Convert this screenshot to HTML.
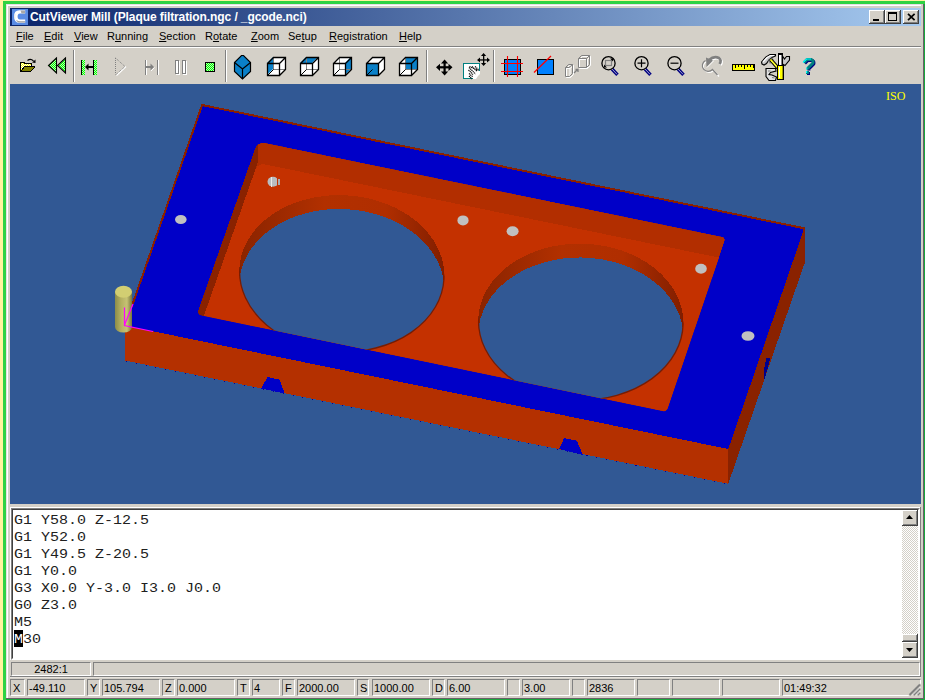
<!DOCTYPE html>
<html><head><meta charset="utf-8">
<style>
*{margin:0;padding:0;box-sizing:border-box}
html,body{width:925px;height:700px;overflow:hidden;background:#fff49e;font-family:"Liberation Sans",sans-serif}
.a{position:absolute}
#green{left:3px;top:1px;width:922px;height:699px;background:#2ed243}
#win{left:6px;top:4px;width:918px;height:695px;background:#d4d0c8;border-left:1px solid #e8dee4;border-top:1px solid #e8dee4}
#title{left:10px;top:8px;width:911px;height:18px;background:linear-gradient(to right,#0a246a,#a6caf0)}
#ttext{left:30px;top:10px;font:bold 12px "Liberation Sans",sans-serif;color:#fff;white-space:nowrap;letter-spacing:-0.09px}
.btn{width:16px;height:14px;background:#d4d0c8;box-shadow:inset -1px -1px #404040,inset 1px 1px #fff,inset -2px -2px #808080}
.sbb{width:16px;height:16px;background:#d4d0c8;box-shadow:inset -1px -1px #404040,inset 1px 1px #fff,inset -2px -2px #808080}
.menu{top:30px;font-size:11px;color:#000;white-space:nowrap}
.menu u{text-decoration:underline;text-decoration-thickness:1px;text-underline-offset:1px}
#viewport{left:10px;top:84px;width:911px;height:420px;background:#315894;overflow:hidden}
#code{left:11px;top:508px;width:909px;height:152px;border-top:1px solid #808080;border-left:1px solid #808080;border-right:1px solid #fff;border-bottom:1px solid #fff}
#codein{left:0;top:0;width:907px;height:150px;border-top:1px solid #404040;border-left:1px solid #404040;border-right:1px solid #fff;border-bottom:1px solid #fff;background:#fff;overflow:hidden}
.cl{position:absolute;left:1px;font:15px "Liberation Mono",monospace;color:#202020;white-space:pre;height:17px;line-height:17px;transform:scaleY(0.8);transform-origin:0 12.5px}
.pn{position:absolute;height:17px;border-top:1px solid #808080;border-left:1px solid #808080;border-right:1px solid #fff;border-bottom:1px solid #fff;font-size:11px;line-height:17px;white-space:nowrap;padding-left:1px;color:#000}
.pl{padding-left:2px}
</style></head><body>
<div id="green" class="a"></div>
<div class="a" style="left:924px;top:4px;width:1px;height:696px;background:#18a83c"></div>
<div class="a" style="left:6px;top:699px;width:919px;height:1px;background:#18a83c"></div>
<div id="win" class="a"></div>
<div class="a" style="left:7px;top:5px;width:916px;height:1px;background:#fff"></div>
<div class="a" style="left:7px;top:5px;width:1px;height:693px;background:#fff"></div>
<div class="a" style="left:921px;top:4px;width:2px;height:695px;background:#d4d0c8"></div>
<div class="a" style="left:923px;top:4px;width:1px;height:695px;background:#6a5f68"></div>
<div class="a" style="left:6px;top:698px;width:918px;height:1px;background:#6a5f68"></div>
<div id="title" class="a"></div>
<div id="ttext" class="a">CutViewer Mill (Plaque filtration.ngc / _gcode.nci)</div>
<svg class="a" style="left:12px;top:9px" width="16" height="16" viewBox="0 0 16 16"><rect width="16" height="16" fill="#5a8ce4"/><path d="M13.2,1.2 H7.5 Q2,1.2 2,7.2 Q2,13.8 7.5,13.8 H13.2 V10.5 H8 Q5.6,10.5 5.6,7.5 Q5.6,4.6 8,4.6 H13.2 Z" fill="#fff"/><path d="M8.5,1.5 H13 V4.4 H9.5 Z" fill="#a8a8a8"/><path d="M4.5,12 Q6,13.6 8,13.6 H13 V12.2 H8 Q6,12.2 4.5,11 Z" fill="#9a9a9a"/><path d="M3,5 Q2.5,7 3,9.5" stroke="#e0e0e0" stroke-width="0.8" fill="none"/></svg>
<div class="a btn" style="left:869px;top:10px"><div class="a" style="left:4px;top:9px;width:6px;height:2px;background:#000"></div></div>
<div class="a btn" style="left:885px;top:10px"><div class="a" style="left:3px;top:2px;width:9px;height:9px;border:1px solid #000;border-top-width:2px"></div></div>
<div class="a btn" style="left:903px;top:10px"><svg class="a" style="left:4px;top:3px" width="9" height="8" viewBox="0 0 9 8"><path d="M1,0.8 L7.6,7.2 M7.6,0.8 L1,7.2" stroke="#000" stroke-width="1.7"/></svg></div>


<!-- menu -->
<div class="a menu" style="left:16px"><u>F</u>ile</div>
<div class="a menu" style="left:44px"><u>E</u>dit</div>
<div class="a menu" style="left:74px"><u>V</u>iew</div>
<div class="a menu" style="left:107px">R<u>u</u>nning</div>
<div class="a menu" style="left:159px"><u>S</u>ection</div>
<div class="a menu" style="left:205px">R<u>o</u>tate</div>
<div class="a menu" style="left:251px"><u>Z</u>oom</div>
<div class="a menu" style="left:288px">Se<u>t</u>up</div>
<div class="a menu" style="left:329px"><u>R</u>egistration</div>
<div class="a menu" style="left:399px"><u>H</u>elp</div>
<div class="a" style="left:10px;top:46px;width:911px;height:1px;background:#808080"></div>
<div class="a" style="left:10px;top:47px;width:911px;height:1px;background:#fff"></div>

<!-- toolbar separators -->
<div class="a" style="left:73px;top:50px;width:1px;height:32px;background:#808080"></div>
<div class="a" style="left:74px;top:50px;width:1px;height:32px;background:#fff"></div>
<div class="a" style="left:225px;top:50px;width:1px;height:32px;background:#808080"></div>
<div class="a" style="left:226px;top:50px;width:1px;height:32px;background:#fff"></div>
<div class="a" style="left:426px;top:50px;width:1px;height:32px;background:#808080"></div>
<div class="a" style="left:427px;top:50px;width:1px;height:32px;background:#fff"></div>
<div class="a" style="left:493px;top:50px;width:1px;height:32px;background:#808080"></div>
<div class="a" style="left:494px;top:50px;width:1px;height:32px;background:#fff"></div>

<!-- TOOLBAR_ICONS -->
<svg class="a" style="left:10px;top:48px" width="911" height="36" viewBox="10 48 911 36">
<defs><pattern id="gd" width="2" height="2" patternUnits="userSpaceOnUse"><rect width="2" height="2" fill="#b8f8b0"/><rect width="1" height="1" fill="#00ff00"/><rect x="1" y="1" width="1" height="1" fill="#00ff00"/></pattern><pattern id="yd" width="2" height="2" patternUnits="userSpaceOnUse"><rect width="2" height="2" fill="#ffffff"/><rect width="1" height="1" fill="#ffff00"/><rect x="1" y="1" width="1" height="1" fill="#ffff00"/></pattern></defs>
<g shape-rendering="crispEdges">
<path d="M21,62 h3 v1 h7 v3 h-7 l-3,5 z" fill="url(#yd)"/>
<path d="M20.5,71.5 V62.5 h3.5 v1 h7 v3" fill="none" stroke="#000"/>
<path d="M24,66 h11 v1 l-4,5 h-10 v-1 z" fill="#000"/>
<path d="M24.5,67 h9.5 l-3.5,4 h-8.5 z" fill="#808000"/>
</g>
<path d="M27.5,60.5 Q30.5,58 33.5,61" fill="none" stroke="#000" stroke-width="1.1"/>
<path d="M32,62.5 L35.5,59.5 L35.5,63 Z" fill="#000"/>
<path d="M56.5,58 L48.5,65.5 L56.5,73 Z M65.5,58 L57.5,65.5 L65.5,73 Z" fill="url(#gd)" stroke="#000" stroke-width="1.1"/>
<g shape-rendering="crispEdges"><rect x="81" y="60" width="1" height="15" fill="#000"/><rect x="82" y="60" width="3" height="15" fill="url(#gd)"/><rect x="93" y="60" width="1" height="15" fill="#000"/><rect x="94" y="60" width="3" height="15" fill="url(#gd)"/><rect x="87" y="66" width="6" height="2" fill="#000"/></g>
<path d="M85,67 L88.5,63.5 L88.5,70.5 Z" fill="#000"/>
<path d="M116.5,75.5 L126,66.5" stroke="#fff" stroke-width="1.2" fill="none"/>
<path d="M115.5,58 V74.5 M115.5,58 L125,66.5 L115.5,75" stroke="#808080" stroke-width="1" stroke-dasharray="1,1" fill="none"/>
<g shape-rendering="crispEdges"><rect x="146" y="60" width="1" height="15" fill="#fff"/><rect x="145" y="60" width="1" height="15" fill="#808080"/><rect x="158" y="60" width="1" height="15" fill="#fff"/><rect x="157" y="60" width="1" height="15" fill="#808080"/><rect x="146" y="66" width="6" height="2" fill="#808080"/></g>
<path d="M154,67 L150.5,63.5 L150.5,70.5 Z" fill="#808080"/><path d="M151,71 L154.5,67.5" stroke="#fff" fill="none"/>
<g shape-rendering="crispEdges"><rect x="176" y="61" width="4" height="14" fill="#fff"/><rect x="175.5" y="60.5" width="3" height="13" fill="#fff" stroke="#808080"/><rect x="183" y="61" width="4" height="14" fill="#fff"/><rect x="182.5" y="60.5" width="3" height="13" fill="#fff" stroke="#808080"/></g>
<rect x="205.5" y="62.5" width="9" height="9" fill="url(#gd)" stroke="#000" stroke-width="1.3" shape-rendering="crispEdges"/>
<path d="M241.5,55.5 h2 L250.5,62.5 V71.5 L242.5,79 L234.5,71.5 V62.5 Z" fill="#0a80c8" stroke="#000" stroke-width="1.2"/>
<path d="M234.5,62.5 L242.5,69 L250.5,62.5 M242.5,69 V79" fill="none" stroke="#000" stroke-width="1.2"/>
<path d="M267,63 L273,57 H285 V69 L279,75 H267 Z" fill="#fff"/>
<path d="M267,63 L273,57 V69 L267,75 Z" fill="#0a80c8"/>
<path d="M273.5,57 V69.5 H285" fill="none" stroke="#808080" stroke-width="1" shape-rendering="crispEdges"/>
<path d="M267.5,63.5 H279.5 V75.5 H267.5 Z M267.5,63.5 L273.5,57.5 H285.5 V69.5 L279.5,75.5 M279.5,63.5 L285.5,57.5" fill="none" stroke="#000" stroke-width="1.3"/>
<path d="M267.5,75.5 L273.5,69.5" stroke="#000" stroke-width="1"/>
<path d="M300,63 L306,57 H318 V69 L312,75 H300 Z" fill="#fff"/>
<path d="M300,63 L306,57 H318 L312,63 Z" fill="#0a80c8"/>
<path d="M306.5,57 V69.5 H318" fill="none" stroke="#808080" stroke-width="1" shape-rendering="crispEdges"/>
<path d="M300.5,63.5 H312.5 V75.5 H300.5 Z M300.5,63.5 L306.5,57.5 H318.5 V69.5 L312.5,75.5 M312.5,63.5 L318.5,57.5" fill="none" stroke="#000" stroke-width="1.3"/>
<path d="M300.5,75.5 L306.5,69.5" stroke="#000" stroke-width="1"/>
<path d="M333,63 L339,57 H351 V69 L345,75 H333 Z" fill="#fff"/>
<path d="M345,63 L351,57 V69 L345,75 Z" fill="#0a80c8"/>
<path d="M339.5,57 V69.5 H351" fill="none" stroke="#808080" stroke-width="1" shape-rendering="crispEdges"/>
<path d="M333.5,63.5 H345.5 V75.5 H333.5 Z M333.5,63.5 L339.5,57.5 H351.5 V69.5 L345.5,75.5 M345.5,63.5 L351.5,57.5" fill="none" stroke="#000" stroke-width="1.3"/>
<path d="M333.5,75.5 L339.5,69.5" stroke="#000" stroke-width="1"/>
<path d="M366,63 L372,57 H384 V69 L378,75 H366 Z" fill="#fff"/>
<path d="M366,63 H378 V75 H366 Z" fill="#0a80c8"/>
<path d="M366.5,63.5 H378.5 V75.5 H366.5 Z M366.5,63.5 L372.5,57.5 H384.5 V69.5 L378.5,75.5 M378.5,63.5 L384.5,57.5" fill="none" stroke="#000" stroke-width="1.3"/>
<path d="M366.5,75.5 L372.5,69.5" stroke="#000" stroke-width="1"/>
<path d="M399,63 L405,57 H417 V69 L411,75 H399 Z" fill="#fff"/>
<path d="M405,57 H417 V69 H405 Z" fill="#0a80c8"/>
<path d="M405.5,57 V69.5 H417" fill="none" stroke="#808080" stroke-width="1" shape-rendering="crispEdges"/>
<path d="M399.5,63.5 H411.5 V75.5 H399.5 Z M399.5,63.5 L405.5,57.5 H417.5 V69.5 L411.5,75.5 M411.5,63.5 L417.5,57.5" fill="none" stroke="#000" stroke-width="1.3"/>
<path d="M399.5,75.5 L405.5,69.5" stroke="#000" stroke-width="1"/>
<g fill="#000"><rect x="443.5" y="61" width="2.2" height="13"/><rect x="438" y="66.2" width="13" height="2.2"/><path d="M444.6,59.5 L441,63.5 H448.2 Z M444.6,75.5 L441,71.5 H448.2 Z M436,67.3 L440,63.7 V70.9 Z M452.5,67.3 L448.5,63.7 V70.9 Z"/></g>
<rect x="463" y="63" width="17" height="16" fill="#fff" shape-rendering="crispEdges"/>
<path d="M473,78.5 H463.5 V63.5 H479.5 V70.5" fill="none" stroke="#008080" stroke-width="1.2" shape-rendering="crispEdges"/>
<path d="M478,76 L481,73 V79 H476 Z" fill="#d4d0c8"/>
<g stroke="#000" stroke-width="1.2" fill="none" stroke-dasharray="1.2,0.6">
<path d="M469.5,66.5 L478.5,70.5 M469,67.5 L475.5,74 M468.5,70 L473,74.5 M472,66.5 L477,71.5 M475,66.5 L479,70 M469,73.5 L473,77 M469,76 L472,79"/>
</g>
<g fill="#000"><rect x="483" y="55" width="1.3" height="10"/><rect x="478.5" y="59.3" width="10.5" height="1.3"/><path d="M483.6,53 L481,56 H486.2 Z M483.6,66 L481,63 H486.2 Z M477,60 L480,57.4 V62.6 Z M490,60 L487,57.4 V62.6 Z"/></g>
<rect x="504.5" y="59.5" width="16" height="15" fill="#0080ff" stroke="#000" stroke-width="1.3" shape-rendering="crispEdges"/>
<path d="M507.5,56 V77 M517.5,56 V77 M501,63.5 H523 M501,71.5 H523" stroke="#ff0000" stroke-width="1.1" fill="none"/>
<rect x="537.5" y="59.5" width="16" height="15" fill="#0080ff" stroke="#000" stroke-width="1.3" shape-rendering="crispEdges"/>
<path d="M534,72.5 L551,56" stroke="#ff0000" stroke-width="1.3" fill="none"/>
<g fill="none" stroke-width="1">
<path d="M565.5,76.5 V67.5 L568.5,64.5 H572.5 V73.5 L569.5,76.5 Z M565.5,67.5 H569 L572.5,64.5 M569,67.5 V76.5" stroke="#fff" transform="translate(1,1)"/>
<path d="M565.5,76.5 V67.5 L568.5,64.5 H572.5 V73.5 L569.5,76.5 Z M565.5,67.5 H569 L572.5,64.5" stroke="#808080"/>
<path d="M578.5,67.5 V58.5 L581.5,55.5 H589.5 V64.5 L586.5,67.5 Z M578.5,58.5 H586.5 L589.5,55.5 M586.5,58.5 V67.5" stroke="#fff" transform="translate(1,1)"/>
<path d="M578.5,67.5 V58.5 L581.5,55.5 H589.5 V64.5 L586.5,67.5 Z M578.5,58.5 H586.5 L589.5,55.5 M586.5,58.5 V67.5" stroke="#808080"/>
<path d="M574,73 L578,69 M575.5,69.5 H578 V72" stroke="#808080" stroke-width="1.3"/>
</g>
<path d="M612.0,69 L617.5,74.8" stroke="#000080" stroke-width="3.4" fill="none"/>
<path d="M612.0,69 L617.0,74.3" stroke="#fff" stroke-width="0.8" fill="none" opacity="0.8"/>
<circle cx="608.5" cy="63.2" r="6.6" fill="none" stroke="#000" stroke-width="1.3"/>
<rect x="605.5" y="60.5" width="6" height="5" fill="none" stroke="#808080" stroke-width="1.2"/><path d="M604,67.5 L604,64.5 L607,67.5 Z M613,58.5 L613,61.5 L610,58.5 Z" fill="#000"/>
<path d="M645.0,69 L650.5,74.8" stroke="#000080" stroke-width="3.4" fill="none"/>
<path d="M645.0,69 L650.0,74.3" stroke="#fff" stroke-width="0.8" fill="none" opacity="0.8"/>
<circle cx="641.5" cy="63.2" r="6.6" fill="none" stroke="#000" stroke-width="1.3"/>
<path d="M637.5,63.2 H645.5 M641.5,59.2 V67.2" stroke="#000" stroke-width="1.2"/>
<path d="M678.0,69 L683.5,74.8" stroke="#000080" stroke-width="3.4" fill="none"/>
<path d="M678.0,69 L683.0,74.3" stroke="#fff" stroke-width="0.8" fill="none" opacity="0.8"/>
<circle cx="674.5" cy="63.2" r="6.6" fill="none" stroke="#000" stroke-width="1.3"/>
<path d="M670.5,63.2 H678.5" stroke="#000" stroke-width="1.2"/>
<g fill="none">
<path d="M705.5,60.5 A5.8,5.8 0 1 0 712.5,69.5 L718,75.5" stroke="#fff" stroke-width="1.2" transform="translate(1,1)"/>
<path d="M705.5,60.5 A5.8,5.8 0 1 0 712.5,69.5 L717.5,75" stroke="#808080" stroke-width="1.2"/>
<path d="M709,60 Q714,55.5 719,58 Q722,60.5 719.5,64" stroke="#fff" stroke-width="2.6" transform="translate(1,1)"/>
<path d="M709,60 Q714,55.5 719,58 Q722,60.5 719.5,64" stroke="#808080" stroke-width="2.6"/>
</g>
<path d="M706,57.5 L713,60.5 L706.5,67 Z" fill="#808080"/><path d="M707,67.5 L713.5,61" stroke="#fff" stroke-width="1"/>
<rect x="732.5" y="64.5" width="22" height="6" fill="#ffff00" stroke="#000" stroke-width="1.3" shape-rendering="crispEdges"/>
<path d="M735.5,65 V68 M738.5,65 V67 M741.5,65 V67 M744.5,65 V68.5 M747.5,65 V67 M750.5,65 V67 M753,65 V68" stroke="#000" stroke-width="1" shape-rendering="crispEdges"/>
<path d="M761.5,62 L766,57 L770,54.5 H775.5 V56 L772,57.5 L769,60 L766.5,63.5 L764,65 L762,64 Z" fill="#c8c8c8" stroke="#000" stroke-width="1.1"/>
<path d="M763,62 L767,57.5 L770.5,55.5 H774" stroke="#fff" stroke-width="1.2" fill="none"/>
<path d="M768,61 L772,57.5 L774,60 L770,64 Z" fill="#909090"/>
<path d="M770.5,59.5 L778,68" stroke="#000" stroke-width="3.6" fill="none"/><path d="M770.5,59.5 L778,68" stroke="#ffff00" stroke-width="1.8" fill="none"/><path d="M771.5,61 L777,67" stroke="#fff" stroke-width="0.7" stroke-dasharray="1,1" fill="none"/>
<path d="M782.5,56 L784.5,59 L786.5,56.5 H789.5 V60 L785,65.5 L782.5,64 Z" fill="#c8c8c8" stroke="#000" stroke-width="1.1"/>
<path d="M766,68.5 H775.5 L776,71 L770.5,72.5 L769,74.5 L772,75 L776.5,77 L775.5,80.5 H769 L766,76.5 Z" fill="#e0e0e0" stroke="#000" stroke-width="1.1"/>
<path d="M768,71 L770.5,71 M772,77.5 L774.5,78" stroke="#808080" stroke-width="1.2" fill="none"/>
<rect x="778" y="53" width="5" height="2" fill="#000" shape-rendering="crispEdges"/>
<rect x="779" y="55" width="3" height="10" fill="#fff" shape-rendering="crispEdges"/><rect x="781" y="55" width="1" height="10" fill="#808080" shape-rendering="crispEdges"/><rect x="778" y="55" width="1" height="10" fill="#000" shape-rendering="crispEdges"/><rect x="782" y="55" width="1" height="10" fill="#000" shape-rendering="crispEdges"/>
<path d="M777.5,65.5 H783.5 V79.5 H777.5 Z" fill="#ffff00" stroke="#000" stroke-width="1.1" shape-rendering="crispEdges"/>
<rect x="779" y="67" width="1" height="11" fill="#fff" shape-rendering="crispEdges"/><rect x="782" y="66" width="1" height="13" fill="#a0a000" shape-rendering="crispEdges"/>
<path d="M804,62.5 L807,59.5 H811.5 L813,61 V63 L808,68 V69.5" fill="none" stroke="#000080" stroke-width="3" stroke-linejoin="bevel" transform="translate(0.9,0.9)"/>
<path d="M804,62.5 L807,59.5 H811.5 L813,61 V63 L808,68 V69.5" fill="none" stroke="#008080" stroke-width="3" stroke-linejoin="bevel"/>
<path d="M803,62.5 L806.5,59 H811" fill="none" stroke="#00ffff" stroke-width="1.2"/><path d="M806.8,67.5 V69.5" fill="none" stroke="#00ffff" stroke-width="1"/>
<rect x="807" y="72" width="3" height="3" fill="#000080"/><rect x="806" y="71" width="3" height="3" fill="#008080"/><rect x="806" y="71" width="1.2" height="2" fill="#00ffff"/>
</svg>
<!-- /TOOLBAR_ICONS -->

<div id="viewport" class="a">
<!-- SCENE -->
<svg class="a" style="left:0;top:0" width="911" height="420" viewBox="10 84 911 420" shape-rendering="crispEdges">
<defs>
<clipPath id="pk"><path d="M255.0,149.0 Q257.7,141.4 265.5,143.0 L721.9,236.7 Q725.8,237.5 724.5,241.3 L667.8,408.0 Q666.5,411.8 662.6,411.0 L201.7,315.4 Q196.8,314.4 198.5,309.7 Z"/></clipPath>
<clipPath id="ex0"><ellipse cx="341.8" cy="287.40000000000003" rx="104.6" ry="80.4" transform="rotate(2.85 341.8 287.40000000000003)"/></clipPath>
<clipPath id="rim0"><ellipse cx="341.8" cy="273.6" rx="102.6" ry="78.4" transform="rotate(2.85 341.8 273.6)"/></clipPath>
<clipPath id="ex1"><ellipse cx="580.8" cy="335.8" rx="104.6" ry="80.3" transform="rotate(1.19 580.8 335.8)"/></clipPath>
<clipPath id="rim1"><ellipse cx="580.8" cy="322.0" rx="102.6" ry="78.3" transform="rotate(1.19 580.8 322.0)"/></clipPath>
<linearGradient id="hw" x1="0" x2="1" y1="0" y2="0"><stop offset="0" stop-color="#8a2400"/><stop offset="0.4" stop-color="#b23000"/><stop offset="0.7" stop-color="#b02e00"/><stop offset="1" stop-color="#801e00"/></linearGradient>
<linearGradient id="tw" x1="0" x2="1" y1="0" y2="0"><stop offset="0" stop-color="#9a2800"/><stop offset="0.12" stop-color="#b22e00"/><stop offset="1" stop-color="#b22e00"/></linearGradient>
</defs>
<polygon points="125.1,325.6 728.3,449.0 728.3,483.8 125.0,360.5" fill="#b43000"/>
<polygon points="804.3,228.3 804.3,264.0 728.3,483.8 728.3,449.0" fill="#8a2200"/>
<polygon points="261.3,388.5 267.4,377 279.5,379.7 284.8,393.5" fill="#0000c8"/>
<polygon points="559.2,449 564,438.2 576.7,440.6 583,455" fill="#0000c8"/>
<polygon points="766.5,358 770.5,358 764,381 764,369" fill="#00008c"/>
<line x1="126" y1="361.5" x2="727" y2="484.5" stroke="#0000a0" stroke-width="1" stroke-dasharray="1,9" shape-rendering="crispEdges"/>
<polygon points="202.1,105.0 804.3,228.3 728.3,449.0 125.1,325.6" fill="#0000c8"/>
<polyline points="125.1,325.6 202.1,105.0 804.3,228.3 804.3,264.0" fill="none" stroke="#8b2000" stroke-width="2" shape-rendering="crispEdges"/>
<g clip-path="url(#pk)">
<path d="M255.0,149.0 Q257.7,141.4 265.5,143.0 L721.9,236.7 Q725.8,237.5 724.5,241.3 L667.8,408.0 Q666.5,411.8 662.6,411.0 L201.7,315.4 Q196.8,314.4 198.5,309.7 Z" fill="url(#tw)"/>
<polygon points="257.7,141.4 196.8,314.4 196.8,335.9 257.7,162.9" fill="#8a2200"/>
<path d="M255.0,170.5 Q257.7,162.9 265.5,164.5 L721.9,258.2 Q725.8,259.0 724.5,262.8 L667.8,429.5 Q666.5,433.3 662.6,432.5 L201.7,336.9 Q196.8,335.9 198.5,331.2 Z" fill="#c43100"/>
<ellipse cx="341.8" cy="273.6" rx="102.6" ry="78.4" transform="rotate(2.85 341.8 273.6)" fill="url(#hw)"/>
<g clip-path="url(#rim0)"><ellipse cx="341.8" cy="287.40000000000003" rx="102.6" ry="78.4" transform="rotate(2.85 341.8 287.40000000000003)" fill="#315894"/></g>
<g clip-path="url(#ex0)"><ellipse cx="341.8" cy="273.6" rx="102.3" ry="78.10000000000001" transform="rotate(2.85 341.8 273.6)" fill="none" stroke="#7a1c00" stroke-width="1.3" shape-rendering="auto"/></g>
<ellipse cx="580.8" cy="322.0" rx="102.6" ry="78.3" transform="rotate(1.19 580.8 322.0)" fill="url(#hw)"/>
<g clip-path="url(#rim1)"><ellipse cx="580.8" cy="335.8" rx="102.6" ry="78.3" transform="rotate(1.19 580.8 335.8)" fill="#315894"/></g>
<g clip-path="url(#ex1)"><ellipse cx="580.8" cy="322.0" rx="102.3" ry="78.0" transform="rotate(1.19 580.8 322.0)" fill="none" stroke="#7a1c00" stroke-width="1.3" shape-rendering="auto"/></g>
</g>
<ellipse cx="180.8" cy="219.5" rx="5.8" ry="4.6" fill="#c0c0c0" shape-rendering="auto"/>
<ellipse cx="463" cy="220.4" rx="5.6" ry="5" fill="#c0c0c0" shape-rendering="auto"/>
<ellipse cx="512.6" cy="231.2" rx="6" ry="5" fill="#c0c0c0" shape-rendering="auto"/>
<ellipse cx="701" cy="268.8" rx="5.8" ry="5" fill="#c0c0c0" shape-rendering="auto"/>
<ellipse cx="748" cy="336" rx="6.5" ry="4.8" fill="#c0c0c0" shape-rendering="auto"/>
<ellipse cx="273" cy="181.8" rx="5.5" ry="5" fill="#b8bcc0" shape-rendering="auto"/><rect x="270.5" y="177" width="1" height="10" fill="#e8e8e8"/><rect x="276.5" y="177" width="1.2" height="10" fill="#c43100"/><rect x="278" y="179" width="2" height="6" fill="#a8acb0"/><rect x="265" y="176" width="2.5" height="4" fill="#c43100"/>
<g shape-rendering="auto">
<linearGradient id="tl" x1="0" x2="1"><stop offset="0" stop-color="#8c8c48"/><stop offset="0.35" stop-color="#b4b060"/><stop offset="0.7" stop-color="#c6c274"/><stop offset="1" stop-color="#76743a"/></linearGradient>
<path d="M115,291.7 L115,327 A8.5,5.5 0 0 0 132,327 L132,291.7 Z" fill="url(#tl)"/>
<ellipse cx="123.5" cy="291.7" rx="8.5" ry="6" fill="#d2ce72"/>
</g>
<polyline points="124.5,307.5 124.5,325.5 153,331.5" fill="none" stroke="#ff00ff" stroke-width="1.2" shape-rendering="auto"/>
<line x1="124.5" y1="325" x2="133" y2="304" stroke="#ff00ff" stroke-width="1.2" shape-rendering="auto"/>
<text x="886" y="100" font-family="Liberation Serif" font-size="12" fill="#ffff00">ISO</text>
</svg>
<!-- /SCENE -->
</div>

<div class="a" style="left:10px;top:507px;width:911px;height:1px;background:#fff"></div>
<div class="a" style="left:10px;top:507px;width:1px;height:153px;background:#fff"></div>
<div id="code" class="a"><div id="codein" class="a">
<div class="a" style="left:889px;top:0;width:16px;height:148px;background:repeating-conic-gradient(#fff 0 25%,#d4d0c8 0 50%) 0 0/2px 2px"></div>
<div class="a sbb" style="left:889px;top:0"><svg class="a" style="left:4px;top:5px" width="7" height="4" viewBox="0 0 7 4"><path d="M3.5,0 L7,4 H0 Z" fill="#000"/></svg></div>
<div class="a sbb" style="left:889px;top:124px;height:8px"></div>
<div class="a sbb" style="left:889px;top:132px"><svg class="a" style="left:4px;top:6px" width="7" height="4" viewBox="0 0 7 4"><path d="M0,0 H7 L3.5,4 Z" fill="#000"/></svg></div>
<div class="cl" style="top:2px">G1 Y58.0 Z-12.5</div>
<div class="cl" style="top:19px">G1 Y52.0</div>
<div class="cl" style="top:36px">G1 Y49.5 Z-20.5</div>
<div class="cl" style="top:53px">G1 Y0.0</div>
<div class="cl" style="top:70px">G3 X0.0 Y-3.0 I3.0 J0.0</div>
<div class="cl" style="top:87px">G0 Z3.0</div>
<div class="cl" style="top:104px">M5</div>
<div class="a" style="left:1px;top:120px;width:9px;height:17px;background:#000"></div>
<div class="cl" style="top:121px"><span style="color:#fff">M</span>30</div>
</div></div>

<!-- STATUS -->

<div class="a" style="left:11px;top:662px;width:80px;height:14px;border-top:1px solid #808080;border-left:1px solid #808080;border-right:1px solid #fff;border-bottom:1px solid #fff;font-size:11px;line-height:12px;text-align:center">2482:1</div>
<div class="a" style="left:93px;top:662px;width:827px;height:14px;border-top:1px solid #808080;border-left:1px solid #808080;border-right:1px solid #fff;border-bottom:1px solid #fff"></div>
<div class="a" style="left:10px;top:676px;width:911px;height:1px;background:#808080"></div>
<div class="a" style="left:920px;top:507px;width:1px;height:170px;background:#808080"></div>
<div class="a" style="left:10px;top:677px;width:911px;height:1px;background:#e6e2dc"></div>
<div class="pn pl" style="left:10px;top:679px;width:15px">X</div>
<div class="pn" style="left:27px;top:679px;width:58px">-49.110</div>
<div class="pn pl" style="left:87px;top:679px;width:13px">Y</div>
<div class="pn" style="left:102px;top:679px;width:58px">105.794</div>
<div class="pn pl" style="left:162px;top:679px;width:13px">Z</div>
<div class="pn" style="left:177px;top:679px;width:58px">0.000</div>
<div class="pn pl" style="left:237px;top:679px;width:13px">T</div>
<div class="pn" style="left:252px;top:679px;width:28px">4</div>
<div class="pn pl" style="left:282px;top:679px;width:13px">F</div>
<div class="pn" style="left:297px;top:679px;width:58px">2000.00</div>
<div class="pn pl" style="left:357px;top:679px;width:12px">S</div>
<div class="pn" style="left:372px;top:679px;width:58px">1000.00</div>
<div class="pn pl" style="left:432px;top:679px;width:13px">D</div>
<div class="pn" style="left:447px;top:679px;width:58px">6.00</div>
<div class="pn" style="left:507px;top:679px;width:13px"></div>
<div class="pn" style="left:522px;top:679px;width:48px">3.00</div>
<div class="pn" style="left:572px;top:679px;width:13px"></div>
<div class="pn" style="left:587px;top:679px;width:48px">2836</div>
<div class="pn" style="left:637px;top:679px;width:33px"></div>
<div class="pn" style="left:672px;top:679px;width:48px"></div>
<div class="pn" style="left:722px;top:679px;width:58px"></div>
<div class="pn" style="left:782px;top:679px;width:139px">01:49:32</div>
<svg class="a" style="left:906px;top:680px" width="15" height="16" viewBox="0 0 15 16"><path d="M15,0 V16 H0 Z" fill="#d4d0c8"/><path d="M14.5,0 V3.5 L2.5,15.5 H0" fill="none" stroke="#fff" stroke-width="1"/><path d="M3.5,15 L14,4.5 M7.5,15 L14,8.5 M11.5,15 L14,12.5" stroke="#808080" stroke-width="2"/><path d="M6,15.5 L14.5,7 M10,15.5 L14.5,11" stroke="#fff" stroke-width="0.8"/></svg>
</body></html>
